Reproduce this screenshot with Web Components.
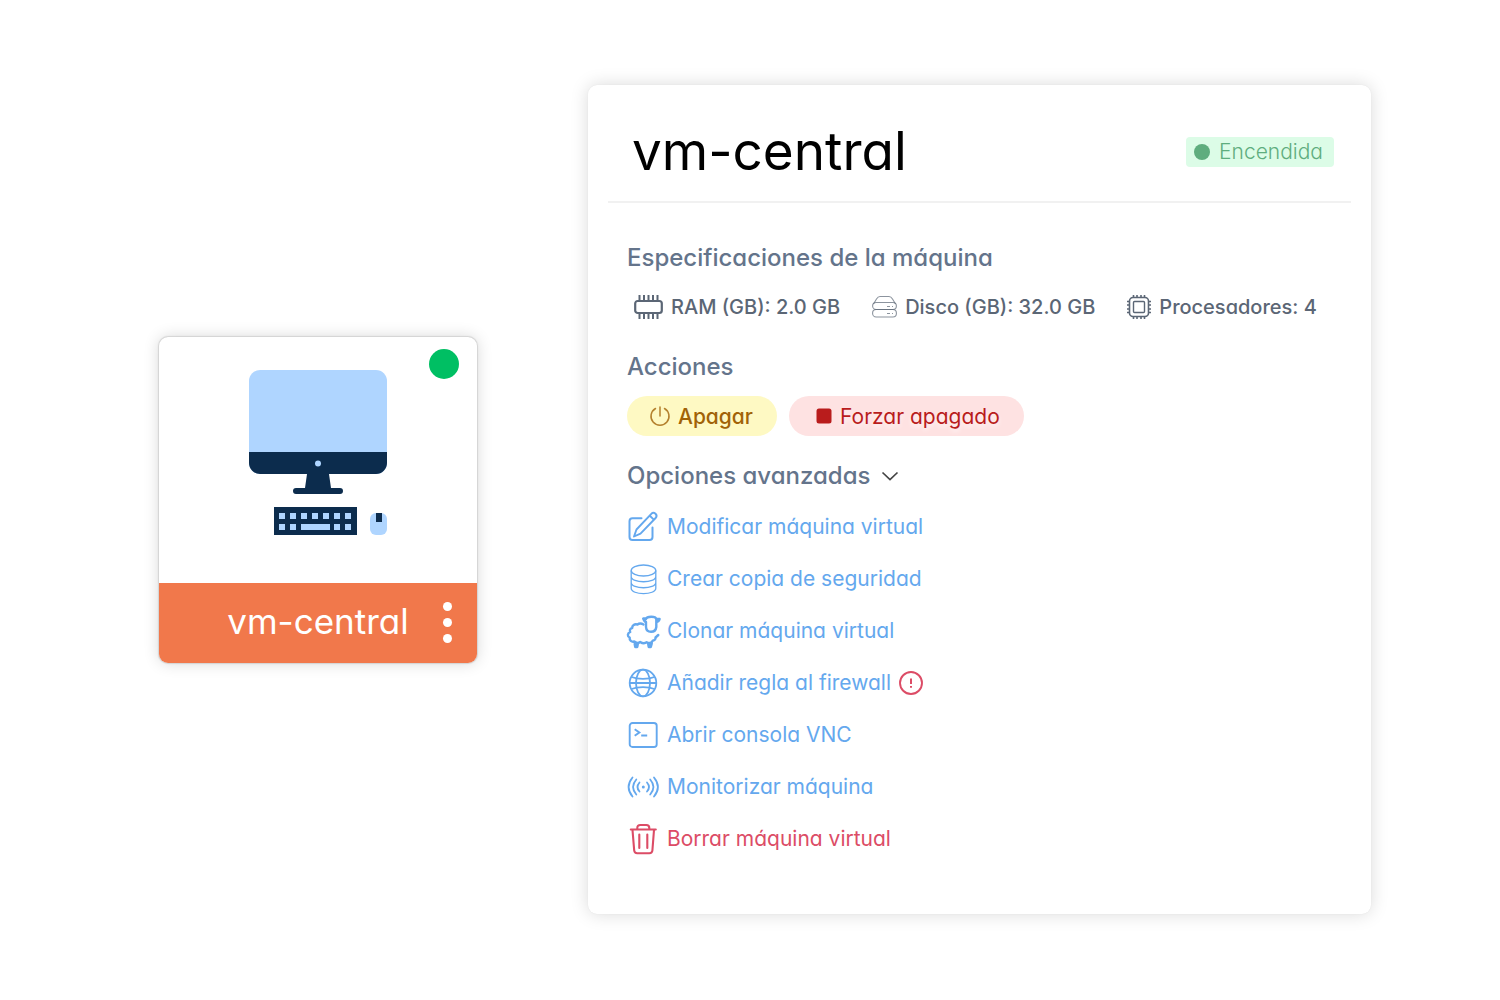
<!DOCTYPE html>
<html lang="es">
<head>
<meta charset="utf-8">
<meta name="viewport" content="width=device-width, initial-scale=1">
<title>vm-central</title>
<style>
	body {
		margin: 0;
		background: #fff;
		font-family: Inter, "Open Sans", sans-serif;
		font-feature-settings: "cv11";
	}
</style>
</head>
<body>
<vm-page>
	<vm-card slot="card" name="vm-central"></vm-card>
	<vm-panel slot="panel" name="vm-central">
		<vm-status slot="status">Encendida</vm-status>
		<vm-section heading="Especificaciones de la máquina">
			<vm-specs>
				<vm-spec icon="ram">RAM (GB): 2.0 GB</vm-spec>
				<vm-spec icon="disk">Disco (GB): 32.0 GB</vm-spec>
				<vm-spec icon="cpu">Procesadores: 4</vm-spec>
			</vm-specs>
		</vm-section>
		<vm-section heading="Acciones" class="actions">
			<vm-action icon="power" kind="warn">Apagar</vm-action>
			<vm-action icon="stop" kind="danger">Forzar apagado</vm-action>
		</vm-section>
		<vm-section heading="Opciones avanzadas" collapsible class="options">
			<vm-option icon="edit">Modificar máquina virtual</vm-option>
			<vm-option icon="database">Crear copia de seguridad</vm-option>
			<vm-option icon="sheep">Clonar máquina virtual</vm-option>
			<vm-option icon="globe" alert>Añadir regla al firewall</vm-option>
			<vm-option icon="terminal">Abrir consola VNC</vm-option>
			<vm-option icon="signal">Monitorizar máquina</vm-option>
			<vm-option icon="trash" danger>Borrar máquina virtual</vm-option>
		</vm-section>
	</vm-panel>
</vm-page>

<script>
const icons = {
	ram: [29, 24, `<rect x="1.200" y="6" width="26.600" height="12" rx="2.500" stroke-width="2.200"/>
		<path stroke-width="2" d="M5.500 0v5M10 0v5M14.500 0v5M19 0v5M23.500 0v5M5.500 19v5M10 19v5M14.500 19v5M19 19v5M23.500 19v5"/>`],
	disk: [25, 24, `<g stroke-width="1.100" stroke-opacity=".7"><path d="M1.500 9 4.500 4Q6 1.500 8 1.500h9q2 0 3.500 2.500l3 5"/>
		<rect x=".6" y="7.500" width="23.800" height="7" rx="3.500"/><rect x=".6" y="14.500" width="23.800" height="7.500" rx="3.500"/>
		<path d="M15 11.500h3M20 11.500h1M15 18.500h3M20 18.500h1"/></g>`],
	cpu: [24, 24, `<rect x="2.500" y="2.500" width="19" height="19" rx="3.500" stroke-width="1.600"/>
		<rect x="6.500" y="6.500" width="11" height="11" rx="1" stroke-width="1.400"/>
		<path stroke-width="1.600" d="M6.500 0v2M10 0v2M14 0v2M17.500 0v2M6.500 22v2M10 22v2M14 22v2M17.500 22v2M0 6.500h2M0 10h2M0 14h2M0 17.500h2M22 6.500h2M22 10h2M22 14h2M22 17.500h2"/>`],
	power: [20, 20, `<path stroke-width="1.500" stroke-opacity=".8" stroke-linecap="round" d="M10 1v9M5.500 2.500a9 9 0 1 0 9 0"/>`],
	stop: [16, 16, `<rect x=".5" y=".5" width="15" height="15" rx="2.500" fill="currentColor" stroke="none"/>`],
	chevron: [18, 18, `<path stroke-width="1.700" d="m1.500 5.500 7.500 7 7.500-7"/>`],
	edit: [32, 32, `<path stroke-width="2" stroke-linecap="round" d="M14.500 7.300H5.500a3 3 0 0 0-3 3V26a3 3 0 0 0 3 3h17a3 3 0 0 0 3-3V16.500"/>
		<path stroke-width="1.900" stroke-linejoin="round" d="m7 25.500 2.500-7L24.300 2.900a2.900 2.900 0 0 1 4.300 4.100L13.500 22.600ZM22.800 4.800l4 3.800"/>`],
	database: [32, 32, `<g stroke-width="1.300"><ellipse cx="16.500" cy="7.500" rx="12.300" ry="5.500"/>
		<path d="M4.200 7.500v17.800c0 7 24.600 7 24.600 0V7.500M4.200 13.500c0 7 24.600 7 24.600 0M4.200 19.500c0 7 24.600 7 24.600 0"/></g>`],
	sheep: [32, 32, `<g stroke-width="2.400" stroke-linecap="round" stroke-linejoin="round">
		<path d="M18.800 4.300C20 1 28.500 1 29.300 4.200V12q-.6 4.800-5.300 4.800T19 12V7q-1.500 0-2.800-3.500h2.600M29.300 4h3.300q-.6 2.600-3.300 3"/>
		<path d="M16.500 9.500c-2-1.200-4.500-1.200-6 0-3-1-5.500 1-5.300 3.500-2.200.5-2.800 2.500-2 4-3 1.200-3 4.500-.5 5.500-.5 3 2 4.700 4.500 4 2 1.800 4.200 1.800 6 .5 2.200 1.500 5 1.500 6.500.2 2.200 1.300 5 .8 6-1.500 2-.3 3.200-1.800 2.800-3.200l2.800-2.500"/>
		<path stroke-width="3" d="m8 29 .5 2.800h1.500l.5-2.800M21.500 29l.5 2.800h1.500l1-3.500"/></g>`],
	globe: [32, 32, `<g stroke-width="1.800"><circle cx="16" cy="16" r="13.300"/><ellipse cx="16" cy="16" rx="7" ry="13.300"/>
		<path d="M4.500 10c6 2.500 17 2.500 23 0M4.500 22c6-2.500 17-2.500 23 0M2.700 16h26.600"/></g>`],
	terminal: [32, 32, `<rect x="2.700" y="4" width="27" height="24" rx="2.800" stroke-width="1.900"/>
		<path stroke-width="2" d="m7.700 10.300 4.600 3.200-4.600 3.200M14.200 16.500h6"/>`],
	signal: [32, 32, `<g stroke-width="1.800" stroke-linecap="round"><path d="M5.500 6.500q-7.800 9.500 0 19M9.300 8.500q-6.500 7.500 0 15M12.500 11.500q-4 4.500 0 9M27 6.500q7.800 9.500 0 19M23.200 8.500q6.500 7.500 0 15M20 11.500q4 4.500 0 9"/></g>
		<circle cx="16.300" cy="16" r="1.500" fill="currentColor" stroke="none"/>`],
	trash: [32, 32, `<g stroke-width="2.100" stroke-linecap="round" stroke-linejoin="round"><path d="M3.800 6.500h25M10.300 6.500V5q0-3 3-3h6q3 0 3 3v1.500M5.500 7l1.700 20.500q.3 2.700 3 2.700h12.200q2.700 0 3-2.700L27 7M12.300 11.500v13.500M20.300 11.500v13.500"/></g>`],
	alert: [24, 24, `<circle cx="12" cy="12" r="11" stroke-width="1.900"/><path stroke-width="2" d="M12 7.500v5.500M12 15v1.700"/>`]
};

function attach(element, html) {
	const template = document.createElement("template");
	template.innerHTML = html;
	element.attachShadow({mode: "open"}).appendChild(template.content.cloneNode(true));
}

class VmIcon extends HTMLElement {
	constructor() {
		super();
		const [width, height, shapes] = icons[this.getAttribute("name")];
		attach(this, `
<style>
	:host { display: block; flex: none; }
	svg { display: block; overflow: visible; }
</style>
<svg width="${width}" height="${height}" viewBox="0 0 ${width} ${height}" fill="none" stroke="currentColor" aria-hidden="true">${shapes}</svg>`);
	}
}

class VmPage extends HTMLElement {
	constructor() {
		super();
		attach(this, `
<style>
	:host {
		display: grid;
		grid-template-columns: 318fr 783fr;
		gap: 111px;
		align-items: center;
		padding: 85px 129px 85px 159px;
	}
</style>
<slot name="card"></slot>
<slot name="panel"></slot>`);
	}
}

class VmCard extends HTMLElement {
	constructor() {
		super();
		const keys = [0, 11, 22, 33, 44, 55, 66].map(x => `<rect x="${30 + x}" y="143" width="6" height="6"/>`).join("");
		const lowerKeys = [0, 11, 55, 66].map(x => `<rect x="${30 + x}" y="154" width="6" height="6"/>`).join("");
		attach(this, `
<style>
	:host {
		display: block;
		position: relative;
		border-radius: 9px;
		overflow: hidden;
		box-shadow: 0 0 1px 1px #d4d4d4, 0 0 16px rgba(0, 0, 0, 0.16);
	}
	.picture {
		display: flex;
		justify-content: center;
		padding: 33px 0 47px;
	}
	svg { display: block; }
	.light {
		position: absolute;
		top: 12px;
		right: 18px;
		width: 30px;
		height: 30px;
		border-radius: 50%;
		background: #00bf63;
	}
	footer {
		display: grid;
		grid-template-columns: 1fr auto 1fr;
		align-items: center;
		height: 80px;
		background: #f1784b;
		color: #fff;
		font-size: 35px;
	}
	span {
		grid-column: 2;
		padding-bottom: 4px;
	}
	button {
		justify-self: end;
		display: grid;
		gap: 7px;
		margin-right: 25px;
		padding: 0;
		border: 0;
		background: none;
	}
	i {
		width: 9px;
		height: 9px;
		border-radius: 50%;
		background: #fff;
	}
</style>
<div class="picture">
	<svg width="138" height="166" viewBox="0 0 138 166" aria-hidden="true">
		<rect width="138" height="104" rx="11" fill="#afd5ff"/>
		<path fill="#0c2c4d" d="M0 82h138v11a11 11 0 0 1-11 11H80l2 14h9a3 3 0 0 1 0 6H47a3 3 0 0 1 0-6h9l2-14H11A11 11 0 0 1 0 93ZM25 137h83v28H25z"/>
		<circle cx="69" cy="93.500" r="3" fill="#afd5ff"/>
		<g fill="#afd5ff">${keys}${lowerKeys}<rect x="52" y="154" width="29" height="6"/><rect x="121" y="143" width="17" height="22" rx="6"/></g>
		<path fill="#0c2c4d" d="M127 143h6v9h-6z"/>
	</svg>
</div>
<div class="light"></div>
<footer><span></span><button type="button" aria-label="Menú"><i></i><i></i><i></i></button></footer>`);
		this.shadowRoot.querySelector("span").textContent = this.getAttribute("name");
	}
}

class VmPanel extends HTMLElement {
	constructor() {
		super();
		attach(this, `
<style>
	:host {
		display: block;
		padding: 0 20px 59px;
		border-radius: 9px;
		box-shadow: 0 0 1px rgba(0, 0, 0, 0.1), 0 0 18px rgba(0, 0, 0, 0.15);
	}
	header {
		display: flex;
		align-items: center;
		justify-content: space-between;
		height: 116px;
		padding: 0 17px 0 24px;
		border-bottom: 2px solid #f1f1f1;
	}
	h1 {
		margin: 0;
		padding-top: 16px;
		font-size: 53px;
		font-weight: 400;
		line-height: 64px;
	}
	::slotted([slot="status"]) { margin-top: 18px; }
	.body { padding: 39px 19px 0; }
</style>
<header><h1></h1><slot name="status"></slot></header>
<div class="body"><slot></slot></div>`);
		this.shadowRoot.querySelector("h1").textContent = this.getAttribute("name");
	}
}

class VmStatus extends HTMLElement {
	constructor() {
		super();
		attach(this, `
<style>
	:host {
		display: flex;
		align-items: center;
		gap: 9px;
		padding: 0 11px 0 8px;
		border-radius: 4px;
		background: #dcfce7;
		color: #5fad7e;
		font-size: 21px;
		font-weight: 300;
		line-height: 30px;
	}
	i {
		width: 16px;
		height: 16px;
		border-radius: 50%;
		background: currentColor;
	}
</style>
<i></i><span><slot></slot></span>`);
	}
}

class VmSection extends HTMLElement {
	constructor() {
		super();
		const collapsible = this.hasAttribute("collapsible");
		attach(this, `
<style>
	:host { display: block; }
	h2 {
		margin: 0;
		color: #64748b;
		font-size: 24px;
		font-weight: 500;
		line-height: 32px;
	}
	button {
		display: flex;
		align-items: center;
		gap: 11px;
		padding: 0;
		border: 0;
		background: none;
		color: inherit;
		font: inherit;
		font-feature-settings: inherit;
	}
	vm-icon { color: #444; }
	.content { margin-top: 17px; }
	:host(.actions) { margin-top: 28px; }
	:host(.actions) .content {
		display: flex;
		gap: 12px;
		margin-top: 13px;
	}
	:host(.options) { margin-top: 24px; }
	:host(.options) .content {
		display: grid;
		gap: 20px;
		justify-items: start;
		margin-top: 19px;
	}
</style>
<h2></h2>
<div class="content"><slot></slot></div>`);
		const heading = this.shadowRoot.querySelector("h2");
		if(collapsible) {
			heading.innerHTML = `<button type="button" aria-expanded="true"><span></span><vm-icon name="chevron"></vm-icon></button>`;
			heading.querySelector("span").textContent = this.getAttribute("heading");
			const button = heading.querySelector("button");
			const content = this.shadowRoot.querySelector(".content");
			button.addEventListener("click", () => {
				const open = button.getAttribute("aria-expanded") === "true";
				button.setAttribute("aria-expanded", !open);
				content.style.display = open ? "none" : "";
			});
		} else {
			heading.textContent = this.getAttribute("heading");
		}
	}
}

class VmSpecs extends HTMLElement {
	constructor() {
		super();
		attach(this, `
<style>
	:host {
		display: flex;
		gap: 32px;
		padding-left: 7px;
	}
</style>
<slot></slot>`);
	}
}

class VmSpec extends HTMLElement {
	constructor() {
		super();
		attach(this, `
<style>
	:host {
		display: flex;
		align-items: center;
		gap: 8px;
		color: #5b6675;
		font-size: 20px;
		font-weight: 500;
		line-height: 32px;
		white-space: nowrap;
	}
</style>
<vm-icon name="${this.getAttribute("icon")}"></vm-icon><span><slot></slot></span>`);
	}
}

class VmAction extends HTMLElement {
	constructor() {
		super();
		attach(this, `
<style>
	:host { display: block; }
	button {
		display: flex;
		align-items: center;
		gap: 8px;
		height: 40px;
		padding: 0 24px 0 23px;
		border: 0;
		border-radius: 20px;
		background: #fef9c3;
		color: #a16207;
		font: inherit;
		font-feature-settings: inherit;
		font-size: 21px;
		font-weight: 500;
		white-space: nowrap;
	}
	:host([kind="danger"]) button {
		padding-left: 27px;
		background: #fee2e2;
		color: #b91c1c;
		font-weight: 400;
		text-shadow: 0 3px 4px rgba(255, 255, 255, 0.7);
	}
</style>
<button type="button"><vm-icon name="${this.getAttribute("icon")}"></vm-icon><span><slot></slot></span></button>`);
	}
}

class VmOption extends HTMLElement {
	constructor() {
		super();
		attach(this, `
<style>
	:host { display: block; }
	a {
		display: flex;
		align-items: center;
		gap: 8px;
		color: #64a8ee;
		font-size: 21px;
		font-weight: 400;
		line-height: 32px;
		text-decoration: none;
	}
	:host([danger]) a, .alert { color: #dc4c66; }
</style>
<a href="#${this.getAttribute("icon")}"><vm-icon name="${this.getAttribute("icon")}"></vm-icon><span><slot></slot></span>${this.hasAttribute("alert") ? `<vm-icon class="alert" name="alert"></vm-icon>` : ""}</a>`);
	}
}

customElements.define("vm-icon", VmIcon);
customElements.define("vm-page", VmPage);
customElements.define("vm-card", VmCard);
customElements.define("vm-panel", VmPanel);
customElements.define("vm-status", VmStatus);
customElements.define("vm-section", VmSection);
customElements.define("vm-specs", VmSpecs);
customElements.define("vm-spec", VmSpec);
customElements.define("vm-action", VmAction);
customElements.define("vm-option", VmOption);
</script>
</body>
</html>
